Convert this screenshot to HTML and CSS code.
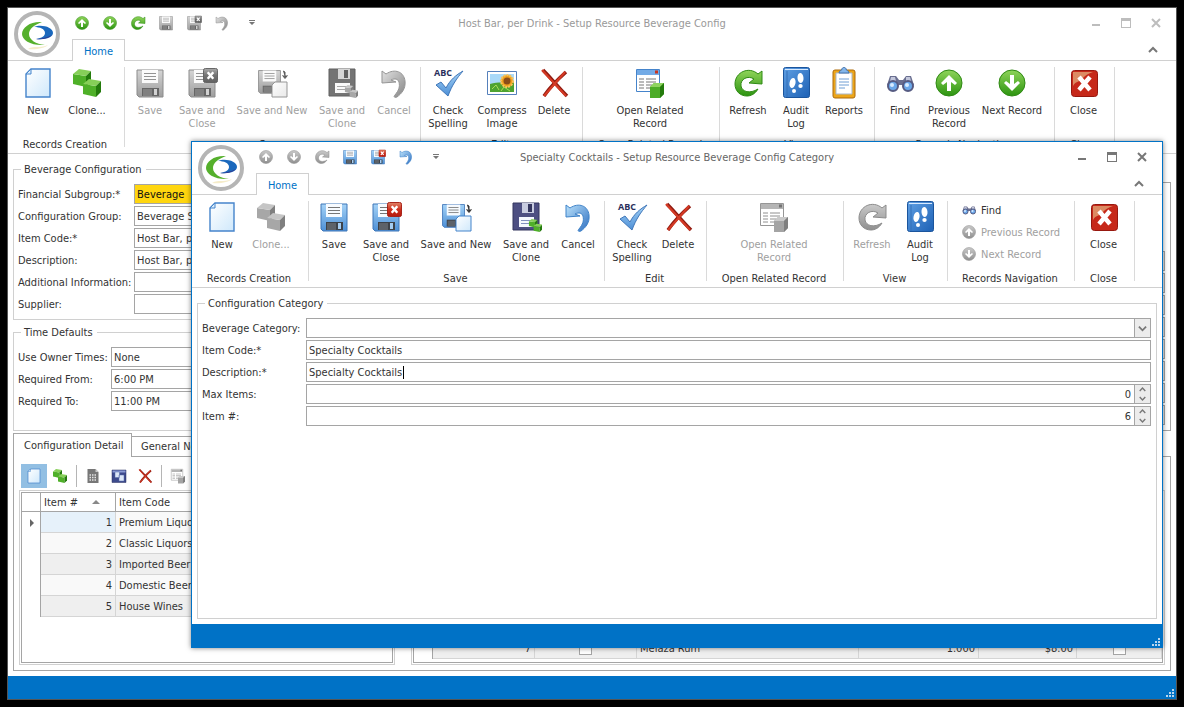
FILE: index.html
```
<!DOCTYPE html>
<html lang="en">
<head>
    <meta charset="UTF-8">
    <meta name="viewport" content="width=device-width, initial-scale=1.0">
    <title>Setup Resource Beverage Config</title>
    <link rel="stylesheet" href="styles.css">
</head>
<body>

    <!-- Icon set -->
    <svg class="icon-defs" aria-hidden="true">
        <defs>
            <linearGradient id="g-paper" x1="0" y1="0" x2="1" y2="1"><stop offset="0" stop-color="#ffffff"/><stop offset="1" stop-color="#cfe8fb"/></linearGradient>
            <linearGradient id="g-green" x1="0" y1="0" x2="0" y2="1"><stop offset="0" stop-color="#8fd45a"/><stop offset="1" stop-color="#2c9410"/></linearGradient>
            <linearGradient id="g-blue" x1="0" y1="0" x2="0" y2="1"><stop offset="0" stop-color="#a5d3f7"/><stop offset="1" stop-color="#4d8fd6"/></linearGradient>
            <linearGradient id="g-book" x1="0" y1="0" x2="1" y2="1"><stop offset="0" stop-color="#5f9fe3"/><stop offset="1" stop-color="#1d61b5"/></linearGradient>
            <linearGradient id="g-red" x1="0" y1="0" x2="0" y2="1"><stop offset="0" stop-color="#e08468"/><stop offset="0.5" stop-color="#cf2f1d"/><stop offset="1" stop-color="#b31a10"/></linearGradient>
            <linearGradient id="g-undo" x1="0" y1="0" x2="1" y2="1"><stop offset="0" stop-color="#b9e1fb"/><stop offset="1" stop-color="#2f6fc0"/></linearGradient>
        </defs>

        <symbol id="i-logo" viewBox="0 0 46 46">
            <circle cx="23" cy="23" r="21" fill="#fff" stroke="#b5b5b5" stroke-width="4"/>
            <path d="M28 11C17 10 8 16 8 23c0 6 9 12 23 11-9-1-16-5-16-11 0-5 5-9 13-12z" fill="#55b02c"/>
            <path d="M20 16c7-3 19 0 19 6 0 4-7 7-17 6 6-1 9-3 9-6 0-4-5-6-11-6z" fill="#1a68bd"/>
            <path d="M22 28c6 0 12-2 16-4-3 3-9 5-16 4z" fill="#34378c"/>
            <path d="M14 38c8 1 17-1 20-4-5 2-9 2-11 2s-6 0-9 2z" fill="#f5ecca"/>
        </symbol>
        <symbol id="i-new" viewBox="0 0 32 32">
            <path d="M9 2h19v28H4V7z" fill="url(#g-paper)" stroke="#4584cb" stroke-width="1.4"/>
            <path d="M9 2v5H4z" fill="#dceefc" stroke="#4584cb"/>
        </symbol>
        <symbol id="i-clone" viewBox="0 0 32 32">
            <path d="M2 7l13 2v11L2 17z" fill="#4fb029"/>
            <path d="M2 7l6-5 12 2-5 5z" fill="#86cf58"/>
            <path d="M15 9l5-5v11l-5 5z" fill="#247b0c"/>
            <path d="M12 17l13 2v11l-13-3z" fill="#4fb029"/>
            <path d="M12 17l6-5 12 2-5 5z" fill="#86cf58"/>
            <path d="M25 19l5-5v11l-5 5z" fill="#247b0c"/>
        </symbol>
        <symbol id="i-disk" viewBox="0 0 32 32">
            <path d="M3 3h26v27H5l-2-2z" fill="url(#g-blue)" stroke="#3f76b8"/>
            <path d="M8 3h16v13H8z" fill="#f7fbff"/>
            <path d="M10 6.500h12M10 9.500h12M10 12.500h12" stroke="#777"/>
            <path d="M8 21h17v8H8z" fill="#3d4249"/>
            <path d="M9 22h9v7H9z" fill="#5d6269"/>
            <path d="M20 22h3v6h-3z" fill="#a5cdf2"/>
        </symbol>
        <symbol id="i-badge-x" viewBox="0 0 16 16">
            <rect x="0.500" y="0.500" width="15" height="15" rx="2" fill="url(#g-red)" stroke="#a31a10"/>
            <path d="M5 4.500l6 7M11 4.500l-6 7" stroke="#fff" stroke-width="2.600"/>
        </symbol>
        <symbol id="i-saveclose" viewBox="0 0 32 32">
            <use href="#i-disk" width="32" height="32"/>
            <use href="#i-badge-x" x="17" y="1" width="15" height="15"/>
        </symbol>
        <symbol id="i-savenew" viewBox="0 0 32 32">
            <use href="#i-disk" x="0" y="1" width="27" height="27"/>
            <path d="M19 15h12v15H16V18z" fill="url(#g-paper)" stroke="#4584cb"/>
            <path d="M27 4l2 1v5M26.500 8.500l2.500 3 2.500-3" fill="#333" stroke="#333"/>
        </symbol>
        <symbol id="i-saveclone" viewBox="0 0 32 32">
            <path d="M3 2h26v25l-2 2H3z" fill="#4d4f82" stroke="#34365f"/>
            <path d="M12 2h12v10H12z" fill="#c8cce0"/>
            <path d="M18 3h4v8h-4z" fill="#34365f"/>
            <path d="M9 16h15v10H9z" fill="#f5f8ff"/>
            <path d="M11 19.500h11M11 22.500h11" stroke="#8292c0"/>
            <use href="#i-clone" x="18" y="17" width="15" height="15"/>
        </symbol>
        <symbol id="i-undo" viewBox="0 0 32 32">
            <path d="M4 4l4 3c9-6 18-2 19 7 1 8-4 13-8 16-2 1-4 0-2-2 4-5 5-8 4-13-1-3-4-4-8-2l5 2L4 16z" fill="url(#g-undo)" stroke="#3f83c9"/>
        </symbol>
        <symbol id="i-spell" viewBox="0 0 32 32">
            <path d="M4 18l5-3 5 6C18 13 24 8 31 4c-6 7-11 14-15 25z" fill="url(#g-blue)" stroke="#3f76b8"/>
        </symbol>
        <symbol id="i-image" viewBox="0 0 32 32">
            <path d="M1.500 4.500h29v23h-29z" fill="#fff" stroke="#5580bb"/>
            <path d="M4 7h24v18H4z" fill="#a9d9f8"/>
            <path d="M4 17c8-3 16 0 24-3v11H4z" fill="#4ea331"/>
            <path d="M6 22l4-4 3 5M15 24l3-4 6 4" stroke="#a8dd55" fill="none"/>
            <circle cx="21" cy="14" r="6" fill="#f0a01c" stroke="#f8c25c" stroke-width="2" stroke-dasharray="2 1"/>
            <circle cx="21" cy="14" r="3.500" fill="#8a4b18"/>
        </symbol>
        <symbol id="i-delete" viewBox="0 0 32 32">
            <path d="M5 3c7 7 15 17 24 26M28 5C19 13 12 20 6 29" fill="none" stroke="#8f1a10" stroke-width="3.500"/>
            <path d="M4 3l24 26M27 5L6 29" stroke="#d43a25" stroke-width="2.200"/>
        </symbol>
        <symbol id="i-related" viewBox="0 0 32 32">
            <path d="M2.500 2.500h23v22h-23z" fill="#fff" stroke="#4584cb"/>
            <path d="M3 3h22v5H3z" fill="#73abe6"/>
            <path d="M21 3.500h3v3h-3z" fill="#c93420"/>
            <path d="M5 12h5M12 12h10M5 15h5M12 15h10M5 18h5M12 18h6M5 21h5M12 21h4" stroke="#777"/>
            <path d="M16 20l4-4h10v11l-4 4H16z" fill="#4cac27"/>
            <path d="M16 20l4-4h10l-4 4z" fill="#8ed35f"/>
            <path d="M26 20l4-4v11l-4 4z" fill="#247b0c"/>
        </symbol>
        <symbol id="i-refresh" viewBox="0 0 32 32">
            <path d="M30 4v13l-13-1 5-4C16 8 8 12 9 19c1 6 9 8 17 3-3 5-7 7-11 7C8 29 3 24 3 17 3 5 17-1 26 7z" fill="url(#g-green)" stroke="#2f8a14"/>
        </symbol>
        <symbol id="i-audit" viewBox="0 0 32 32">
            <rect x="3.500" y="0.500" width="26" height="30" rx="2" fill="url(#g-book)" stroke="#1b559d"/>
            <path d="M5 2.500h23" stroke="#d9eaff"/>
            <path d="M7 4v26" stroke="#3470b8"/>
            <ellipse cx="12.500" cy="16" rx="3" ry="5" fill="#fff" transform="rotate(12 12.500 16)"/>
            <ellipse cx="14" cy="24" rx="2" ry="2" fill="#fff"/>
            <ellipse cx="20.500" cy="11" rx="3" ry="5" fill="#fff" transform="rotate(-5 20 11)"/>
            <ellipse cx="20.500" cy="19" rx="2.200" ry="2" fill="#fff"/>
        </symbol>
        <symbol id="i-reports" viewBox="0 0 32 32">
            <rect x="5" y="3" width="22" height="28" rx="2" fill="#eda61a" stroke="#ad6b0b"/>
            <path d="M8 6h16v21H8z" fill="#fff" stroke="#aab7c8"/>
            <path d="M11 6c0-3 3-2 3-4s4-2 4 0 3 1 3 4z" fill="#84b6ea" stroke="#4272ad"/>
            <path d="M11 12h10M11 15h10M11 18h10M11 21h6" stroke="#6f9ed4"/>
        </symbol>
        <symbol id="i-find" viewBox="0 0 32 32">
            <path d="M6 9h6l3 4h4l3-4h5l3 9H3z" fill="#6a6f90"/>
            <path d="M7 10h4l1 4H6zM22 10h4l1 4h-5z" fill="#c3c7db"/>
            <circle cx="9" cy="19" r="5" fill="#6ba8ea" stroke="#565b82" stroke-width="2"/>
            <circle cx="24" cy="19" r="5" fill="#6ba8ea" stroke="#565b82" stroke-width="2"/>
            <circle cx="8" cy="18" r="2" fill="#d7ebff"/>
            <circle cx="23" cy="18" r="2" fill="#d7ebff"/>
        </symbol>
        <symbol id="i-up" viewBox="0 0 32 32">
            <circle cx="16" cy="16" r="13" fill="url(#g-green)" stroke="#2f8a14"/>
            <path d="M16 8l8 8-2 2-4-3v9h-4v-9l-4 3-2-2z" fill="#fff"/>
        </symbol>
        <symbol id="i-down" viewBox="0 0 32 32">
            <circle cx="16" cy="16" r="13" fill="url(#g-green)" stroke="#2f8a14"/>
            <path d="M16 24l8-8-2-2-4 3V8h-4v9l-4-3-2 2z" fill="#fff"/>
        </symbol>
        <symbol id="i-close" viewBox="0 0 32 32">
            <rect x="3.500" y="3.500" width="26" height="26" rx="3" fill="#c6291a" stroke="#97180f"/>
            <path d="M5 5h20c-6 2-8 4-10 6-1 4-7 2-10 8z" fill="#dc8b63"/>
            <path d="M11 10l11 13M22 10L11 23" stroke="#fff" stroke-width="4.500"/>
        </symbol>
        <symbol id="i-calc" viewBox="0 0 32 32">
            <path d="M5 2h16l6 6v22H5z" fill="#777"/>
            <path d="M21 2v6h6z" fill="#ccc"/>
            <path d="M9 14h14M9 19h14M9 24h14" stroke="#e5e5e5" stroke-width="3" stroke-dasharray="3 2"/>
        </symbol>
        <symbol id="i-windows" viewBox="0 0 32 32">
            <path d="M2 4h28v25H2z" fill="#3d4a8c" stroke="#2a3163"/>
            <path d="M3 5h26v4H3z" fill="#8b9bd4"/>
            <path d="M8 8h9v11H8zM16 14h10v12H16z" fill="#dce7f8" stroke="#566aa8"/>
        </symbol>
        <symbol id="i-grip" viewBox="0 0 8 8">
            <path d="M6 0h2v2H6zM3 3h2v2H3zM6 3h2v2H6zM0 6h2v2H0zM3 6h2v2H3zM6 6h2v2H6z" fill="#b9d6ee"/>
        </symbol>
        <symbol id="i-min" viewBox="0 0 10 10"><path d="M1 6h8v2H1z" fill="currentColor"/></symbol>
        <symbol id="i-max" viewBox="0 0 10 10"><path d="M0 0h10v10H0zM1 3v6h8V3z" fill="currentColor" fill-rule="evenodd"/></symbol>
        <symbol id="i-x" viewBox="0 0 10 10"><path d="M1 1l8 8M9 1L1 9" stroke="currentColor" stroke-width="2"/></symbol>
        <symbol id="i-chevron-up" viewBox="0 0 10 10"><path d="M1 7l4-4 4 4" fill="none" stroke="currentColor" stroke-width="2"/></symbol>
        <symbol id="i-chevron-down" viewBox="0 0 10 10"><path d="M1 3l4 4 4-4" fill="none" stroke="currentColor" stroke-width="2"/></symbol>
        <symbol id="i-more" viewBox="0 0 6 6"><path d="M0 0h6v1H0zM0 2h6L3 5z" fill="currentColor"/></symbol>
    </svg>

    <!-- Host Bar window -->
    <main class="window main-window">
        <svg class="logo"><use href="#i-logo"/></svg>
        <header class="titlebar">
            <div class="quick-access">
                <button type="button" aria-label="Previous record"><svg><use href="#i-up"/></svg></button>
                <button type="button" aria-label="Next record"><svg><use href="#i-down"/></svg></button>
                <button type="button" aria-label="Refresh"><svg><use href="#i-refresh"/></svg></button>
                <button type="button" aria-label="Save" disabled><svg><use href="#i-disk"/></svg></button>
                <button type="button" aria-label="Save and close" disabled><svg><use href="#i-saveclose"/></svg></button>
                <button type="button" aria-label="Cancel" disabled><svg><use href="#i-undo"/></svg></button>
                <button type="button" aria-label="Customize" class="more"><svg><use href="#i-more"/></svg></button>
            </div>
            <h1>Host Bar, per Drink - Setup Resource Beverage Config</h1>
            <div class="window-controls">
                <button type="button" aria-label="Minimize"><svg><use href="#i-min"/></svg></button>
                <button type="button" aria-label="Maximize"><svg><use href="#i-max"/></svg></button>
                <button type="button" aria-label="Close window"><svg><use href="#i-x"/></svg></button>
            </div>
        </header>
        <nav class="ribbon-tabs">
            <a href="#home">Home</a>
            <button type="button" aria-label="Collapse ribbon"><svg><use href="#i-chevron-up"/></svg></button>
        </nav>
        <div class="ribbon">
            <section class="ribbon-group creation">
                <div class="items">
                    <button type="button" class="w-44"><svg><use href="#i-new"/></svg>New</button>
                    <button type="button" class="w-54"><svg><use href="#i-clone"/></svg>Clone...</button>
                </div>
                <h2>Records Creation</h2>
            </section>
            <section class="ribbon-group save">
                <div class="items">
                    <button type="button" class="w-44" disabled><svg><use href="#i-disk"/></svg>Save</button>
                    <button type="button" class="w-60" disabled><svg><use href="#i-saveclose"/></svg>Save and<br>Close</button>
                    <button type="button" class="w-80" disabled><svg><use href="#i-savenew"/></svg>Save and New</button>
                    <button type="button" class="w-60" disabled><svg><use href="#i-saveclone"/></svg>Save and<br>Clone</button>
                    <button type="button" class="w-44" disabled><svg><use href="#i-undo"/></svg>Cancel</button>
                </div>
                <h2>Save</h2>
            </section>
            <section class="ribbon-group edit">
                <div class="items">
                    <button type="button" class="w-48"><svg viewBox="0 0 32 32"><text x="2" y="9" class="icon-abc">ABC</text><use href="#i-spell"/></svg>Check<br>Spelling</button>
                    <button type="button" class="w-60"><svg><use href="#i-image"/></svg>Compress<br>Image</button>
                    <button type="button" class="w-44"><svg><use href="#i-delete"/></svg>Delete</button>
                </div>
                <h2>Edit</h2>
            </section>
            <section class="ribbon-group related">
                <div class="items">
                    <button type="button" class="w-80"><svg><use href="#i-related"/></svg>Open Related<br>Record</button>
                </div>
                <h2>Open Related Record</h2>
            </section>
            <section class="ribbon-group view">
                <div class="items">
                    <button type="button" class="w-48"><svg><use href="#i-refresh"/></svg>Refresh</button>
                    <button type="button" class="w-48"><svg><use href="#i-audit"/></svg>Audit<br>Log</button>
                    <button type="button" class="w-48"><svg><use href="#i-reports"/></svg>Reports</button>
                </div>
                <h2>View</h2>
            </section>
            <section class="ribbon-group navigation">
                <div class="items">
                    <button type="button" class="w-44"><svg><use href="#i-find"/></svg>Find</button>
                    <button type="button" class="w-54"><svg><use href="#i-up"/></svg>Previous<br>Record</button>
                    <button type="button" class="w-72"><svg><use href="#i-down"/></svg>Next Record</button>
                </div>
                <h2>Records Navigation</h2>
            </section>
            <section class="ribbon-group close">
                <div class="items">
                    <button type="button" class="w-44"><svg><use href="#i-close"/></svg>Close</button>
                </div>
                <h2>Close</h2>
            </section>
        </div>

        <div class="content">
            <div class="details">
                <div class="details-left">
                    <fieldset class="config">
                        <legend>Beverage Configuration</legend>
                        <div class="row"><label for="subgroup">Financial Subgroup:*</label><input id="subgroup" class="required" type="text" value="Beverage"></div>
                        <div class="row"><label for="group">Configuration Group:</label><input id="group" type="text" value="Beverage Service"></div>
                        <div class="row"><label for="code">Item Code:*</label><input id="code" type="text" value="Host Bar, per Drink"></div>
                        <div class="row"><label for="desc">Description:</label><input id="desc" type="text" value="Host Bar, per Drink"></div>
                        <div class="row"><label for="info">Additional Information:</label><input id="info" type="text"></div>
                        <div class="row"><label for="supplier">Supplier:</label><input id="supplier" type="text"></div>
                    </fieldset>
                    <fieldset class="times">
                        <legend>Time Defaults</legend>
                        <div class="row"><label for="owner">Use Owner Times:</label><input id="owner" type="text" value="None"></div>
                        <div class="row"><label for="from">Required From:</label><input id="from" type="text" value="6:00 PM"></div>
                        <div class="row"><label for="to">Required To:</label><input id="to" type="text" value="11:00 PM"></div>
                    </fieldset>
                </div>
                <div class="details-right">
                    <input type="text" aria-label="Value 1">
                    <input type="text" aria-label="Value 2">
                    <input type="text" aria-label="Value 3">
                    <input type="text" aria-label="Value 4">
                    <input type="text" aria-label="Value 5">
                    <input type="text" aria-label="Value 6">
                    <input type="text" aria-label="Value 7">
                    <input type="text" aria-label="Value 8">
                </div>
            </div>

            <div class="page-tabs">
                <a href="#detail" class="active">Configuration Detail</a>
                <a href="#notes">General Notes</a>
            </div>
            <div class="page">
                <div class="toolbar">
                    <button type="button" class="selected" aria-label="New item"><svg><use href="#i-new"/></svg></button>
                    <button type="button" aria-label="Clone item"><svg><use href="#i-clone"/></svg></button>
                    <span class="divider"></span>
                    <button type="button" aria-label="Calculate"><svg><use href="#i-calc"/></svg></button>
                    <button type="button" aria-label="Copy"><svg><use href="#i-windows"/></svg></button>
                    <button type="button" aria-label="Delete item"><svg><use href="#i-delete"/></svg></button>
                    <span class="divider"></span>
                    <button type="button" aria-label="Related records" disabled><svg><use href="#i-related"/></svg></button>
                </div>
                <div class="grids">
                    <div class="grid-panel categories">
                        <table>
                            <colgroup><col class="c-mark"><col class="c-item"><col></colgroup>
                            <thead>
                                <tr><th></th><th>Item # <span class="sort"></span></th><th>Item Code</th></tr>
                            </thead>
                            <tbody>
                                <tr class="current"><td><span class="marker"></span></td><td class="num">1</td><td>Premium Liquors</td></tr>
                                <tr><td></td><td class="num">2</td><td>Classic Liquors</td></tr>
                                <tr><td></td><td class="num">3</td><td>Imported Beer</td></tr>
                                <tr><td></td><td class="num">4</td><td>Domestic Beer</td></tr>
                                <tr><td></td><td class="num">5</td><td>House Wines</td></tr>
                            </tbody>
                        </table>
                    </div>
                    <div class="grid-panel drinks">
                        <table>
                            <colgroup><col class="c-mark"><col class="c-seq"><col class="c-seq"><col><col class="c-qty"><col class="c-price"><col class="c-flag"></colgroup>
                            <thead>
                                <tr><th></th><th></th><th></th><th></th><th></th><th></th><th></th></tr>
                            </thead>
                            <tbody>
                                <tr><td></td><td></td><td></td><td></td><td></td><td></td><td></td></tr>
                                <tr><td></td><td></td><td></td><td></td><td></td><td></td><td></td></tr>
                                <tr><td></td><td></td><td></td><td></td><td></td><td></td><td></td></tr>
                                <tr><td></td><td></td><td></td><td></td><td></td><td></td><td></td></tr>
                                <tr><td></td><td></td><td></td><td></td><td></td><td></td><td></td></tr>
                                <tr><td></td><td></td><td></td><td></td><td></td><td></td><td></td></tr>
                                <tr>
                                    <td></td>
                                    <td class="num">7</td>
                                    <td class="check"><input type="checkbox" aria-label="Selected"></td>
                                    <td>Melaza Rum</td>
                                    <td class="num">1.000</td>
                                    <td class="num">$8.00</td>
                                    <td class="check"><input type="checkbox" aria-label="Taxable"></td>
                                </tr>
                            </tbody>
                        </table>
                    </div>
                </div>
            </div>
        </div>
        <footer class="statusbar"><svg><use href="#i-grip"/></svg></footer>
    </main>

    <!-- Specialty Cocktails window -->
    <section class="window dialog">
        <svg class="logo"><use href="#i-logo"/></svg>
        <header class="titlebar">
            <div class="quick-access">
                <button type="button" aria-label="Previous record" disabled><svg><use href="#i-up"/></svg></button>
                <button type="button" aria-label="Next record" disabled><svg><use href="#i-down"/></svg></button>
                <button type="button" aria-label="Refresh" disabled><svg><use href="#i-refresh"/></svg></button>
                <button type="button" aria-label="Save"><svg><use href="#i-disk"/></svg></button>
                <button type="button" aria-label="Save and close"><svg><use href="#i-saveclose"/></svg></button>
                <button type="button" aria-label="Cancel"><svg><use href="#i-undo"/></svg></button>
                <button type="button" aria-label="Customize" class="more"><svg><use href="#i-more"/></svg></button>
            </div>
            <h1>Specialty Cocktails - Setup Resource Beverage Config Category</h1>
            <div class="window-controls">
                <button type="button" aria-label="Minimize"><svg><use href="#i-min"/></svg></button>
                <button type="button" aria-label="Maximize"><svg><use href="#i-max"/></svg></button>
                <button type="button" aria-label="Close window"><svg><use href="#i-x"/></svg></button>
            </div>
        </header>
        <nav class="ribbon-tabs">
            <a href="#dialog-home">Home</a>
            <button type="button" aria-label="Collapse ribbon"><svg><use href="#i-chevron-up"/></svg></button>
        </nav>
        <div class="ribbon">
            <section class="ribbon-group creation">
                <div class="items">
                    <button type="button" class="w-44"><svg><use href="#i-new"/></svg>New</button>
                    <button type="button" class="w-54" disabled><svg><use href="#i-clone"/></svg>Clone...</button>
                </div>
                <h2>Records Creation</h2>
            </section>
            <section class="ribbon-group save">
                <div class="items">
                    <button type="button" class="w-44"><svg><use href="#i-disk"/></svg>Save</button>
                    <button type="button" class="w-60"><svg><use href="#i-saveclose"/></svg>Save and<br>Close</button>
                    <button type="button" class="w-80"><svg><use href="#i-savenew"/></svg>Save and New</button>
                    <button type="button" class="w-60"><svg><use href="#i-saveclone"/></svg>Save and<br>Clone</button>
                    <button type="button" class="w-44"><svg><use href="#i-undo"/></svg>Cancel</button>
                </div>
                <h2>Save</h2>
            </section>
            <section class="ribbon-group edit">
                <div class="items">
                    <button type="button" class="w-48"><svg viewBox="0 0 32 32"><text x="2" y="9" class="icon-abc">ABC</text><use href="#i-spell"/></svg>Check<br>Spelling</button>
                    <button type="button" class="w-44"><svg><use href="#i-delete"/></svg>Delete</button>
                </div>
                <h2>Edit</h2>
            </section>
            <section class="ribbon-group related">
                <div class="items">
                    <button type="button" class="w-80" disabled><svg><use href="#i-related"/></svg>Open Related<br>Record</button>
                </div>
                <h2>Open Related Record</h2>
            </section>
            <section class="ribbon-group view">
                <div class="items">
                    <button type="button" class="w-48" disabled><svg><use href="#i-refresh"/></svg>Refresh</button>
                    <button type="button" class="w-48"><svg><use href="#i-audit"/></svg>Audit<br>Log</button>
                </div>
                <h2>View</h2>
            </section>
            <section class="ribbon-group navigation">
                <div class="items stacked">
                    <button type="button"><svg><use href="#i-find"/></svg>Find</button>
                    <button type="button" disabled><svg><use href="#i-up"/></svg>Previous Record</button>
                    <button type="button" disabled><svg><use href="#i-down"/></svg>Next Record</button>
                </div>
                <h2>Records Navigation</h2>
            </section>
            <section class="ribbon-group close">
                <div class="items">
                    <button type="button" class="w-44"><svg><use href="#i-close"/></svg>Close</button>
                </div>
                <h2>Close</h2>
            </section>
        </div>

        <div class="content">
            <fieldset class="category">
                <legend>Configuration Category</legend>
                <div class="row">
                    <label for="category">Beverage Category:</label>
                    <div class="field">
                        <select id="category"><option></option></select>
                        <span class="drop"><svg><use href="#i-chevron-down"/></svg></span>
                    </div>
                </div>
                <div class="row"><label for="cat-code">Item Code:*</label><input id="cat-code" type="text" value="Specialty Cocktails"></div>
                <div class="row">
                    <label for="cat-desc">Description:*</label>
                    <div class="field"><input id="cat-desc" type="text" value="Specialty Cocktails"><span class="caret"></span></div>
                </div>
                <div class="row">
                    <label for="max-items">Max Items:</label>
                    <div class="field">
                        <input id="max-items" class="num" type="text" value="0">
                        <span class="spin">
                            <button type="button" aria-label="Increase max items"><svg><use href="#i-chevron-up"/></svg></button>
                            <button type="button" aria-label="Decrease max items"><svg><use href="#i-chevron-down"/></svg></button>
                        </span>
                    </div>
                </div>
                <div class="row">
                    <label for="item-no">Item #:</label>
                    <div class="field">
                        <input id="item-no" class="num" type="text" value="6">
                        <span class="spin">
                            <button type="button" aria-label="Increase item number"><svg><use href="#i-chevron-up"/></svg></button>
                            <button type="button" aria-label="Decrease item number"><svg><use href="#i-chevron-down"/></svg></button>
                        </span>
                    </div>
                </div>
            </fieldset>
        </div>
        <footer class="statusbar"><svg><use href="#i-grip"/></svg></footer>
    </section>

</body>
</html>
```
FILE: styles.css
```
* {
    box-sizing: border-box;
}

body {
    margin: 0;
    padding: 7px;
    height: 100vh;
    overflow: hidden;
    background: #000;
    color: #333;
    font: 11px/13px "DejaVu Sans Condensed", Tahoma, sans-serif;
}

button, input, select {
    font: inherit;
    color: inherit;
}

button {
    padding: 0;
    border: 0;
    background: none;
}

button:disabled {
    color: #a0a0a0;
}

button:disabled svg {
    filter: grayscale(1);
    opacity: 0.8;
}

a {
    color: inherit;
    text-decoration: none;
}

h1, h2 {
    margin: 0;
    font: inherit;
}

.icon-defs {
    position: absolute;
    width: 0;
    height: 0;
}

.icon-abc {
    font: bold 9px "Open Sans", sans-serif;
    fill: #2a2f5c;
}

/* Windows */
.window {
    display: flex;
    flex-direction: column;
    background: #fff;
}

.main-window {
    position: relative;
    height: 100%;
    border: 1px solid #555;
}

.dialog {
    position: absolute;
    top: 141px;
    right: 21px;
    bottom: 59px;
    left: 191px;
    border: 1px solid #0072c6;
    border-bottom: 0;
    box-shadow: 0 0 5px rgba(0, 0, 0, 0.5);
}

.logo {
    position: absolute;
    top: 3px;
    left: 6px;
    width: 46px;
    height: 46px;
}

.titlebar {
    display: grid;
    grid-template-columns: 1fr auto 1fr;
    align-items: center;
    height: 30px;
    flex: none;
}

.titlebar h1 {
    color: #666;
}

.main-window .titlebar h1 {
    color: #999;
}

.quick-access {
    display: flex;
    align-items: center;
    gap: 12px;
    padding-left: 66px;
}

.quick-access svg {
    display: block;
    width: 16px;
    height: 16px;
}

.quick-access .more {
    margin-left: 7px;
    color: #777;
}

.quick-access .more svg {
    width: 6px;
    height: 6px;
}

.window-controls {
    display: flex;
    justify-content: flex-end;
    padding-right: 5px;
    color: #777;
}

.main-window .window-controls {
    color: #bdbdbd;
}

.window-controls button {
    width: 30px;
    height: 20px;
}

.window-controls svg {
    display: block;
    width: 10px;
    height: 10px;
    margin: auto;
}

/* Ribbon */
.ribbon-tabs {
    display: flex;
    justify-content: space-between;
    align-items: flex-end;
    height: 23px;
    flex: none;
    padding: 0 18px 0 64px;
    border-bottom: 1px solid #d0d0d0;
}

.ribbon-tabs a {
    width: 53px;
    height: 22px;
    margin-bottom: -1px;
    border: 1px solid #d0d0d0;
    border-bottom: 0;
    background: #fff;
    color: #0072c6;
    line-height: 23px;
    text-align: center;
}

.ribbon-tabs button {
    height: 20px;
    color: #777;
}

.ribbon-tabs button svg {
    display: block;
    width: 10px;
    height: 10px;
}

.ribbon {
    display: flex;
    height: 93px;
    flex: none;
    border-bottom: 1px solid #d0d0d0;
}

.ribbon-group {
    display: flex;
    flex-direction: column;
    justify-content: space-between;
    padding: 6px 3px 2px 0;
    background: linear-gradient(#dadada, #dadada) right 6px / 1px 80px no-repeat;
}

.ribbon-group h2 {
    text-align: center;
    white-space: nowrap;
}

.ribbon-group .items {
    display: flex;
    padding: 0 3px;
}

.items button {
    display: flex;
    flex: none;
    flex-direction: column;
    align-items: center;
    white-space: nowrap;
    text-align: center;
}

.items svg {
    width: 32px;
    height: 32px;
    margin-bottom: 5px;
}

.w-44 { width: 44px; }
.w-48 { width: 48px; }
.w-54 { width: 54px; }
.w-60 { width: 60px; }
.w-72 { width: 72px; }
.w-80 { width: 80px; }

.creation { width: 117px; }
.creation .items { justify-content: center; }
.save { width: 296px; }
.edit { width: 162px; }
.related { width: 137px; }
.related .items { justify-content: center; }
.view { width: 155px; }
.view .items { padding-left: 4px; }
.navigation { width: 180px; }
.close { width: 60px; }
.close .items { justify-content: center; }

.dialog .edit { width: 102px; }
.dialog .view { width: 104px; }
.dialog .navigation { width: 127px; }

.items.stacked {
    flex-direction: column;
    padding-left: 13px;
}

.stacked button {
    flex-direction: row;
    gap: 4px;
    height: 22px;
    padding-bottom: 4px;
}

.stacked svg {
    width: 16px;
    height: 16px;
    margin: 0;
}

/* Forms */
.content {
    display: flex;
    flex-direction: column;
    flex: 1;
    min-height: 0;
    padding: 8px 5px 5px;
}

fieldset {
    margin: 0;
    min-width: 0;
    padding: 8px 5px 5px 4px;
    border: 1px solid #d0d0d0;
}

legend {
    height: 14px;
    margin-left: 3px;
    padding: 0 4px 0 3px;
    line-height: 16px;
}

.row {
    display: flex;
    height: 20px;
    margin-bottom: 2px;
}

.row:last-child {
    margin-bottom: 0;
}

.row label {
    flex: none;
    line-height: 22px;
    white-space: nowrap;
}

.row > input {
    flex: 1;
}

.row input, .row select {
    min-width: 0;
    height: 20px;
    padding: 0 2px;
    border: 1px solid #a5a5a5;
    border-radius: 0;
    background: #fff;
    outline: 0;
}

.row .required {
    background: #ffd60f;
    color: #111;
}

.config label { width: 116px; }
.times label { width: 93px; }
.category label { width: 104px; }

.category {
    flex: 1;
}

.field {
    position: relative;
    display: flex;
    flex: 1;
}

.field input, .field select {
    flex: 1;
    appearance: none;
}

.field .num {
    padding-right: 3px;
    text-align: right;
}

.drop, .spin {
    display: flex;
    flex-direction: column;
    justify-content: center;
    align-items: center;
    width: 17px;
    margin-left: -1px;
    border: 1px solid #a5a5a5;
    background: #ececec;
    color: #777;
    z-index: 1;
}

.drop svg {
    width: 9px;
    height: 9px;
}

.spin button {
    width: 15px;
    height: 9px;
}

.spin svg {
    display: block;
    width: 7px;
    height: 7px;
    margin: 1px auto;
}

.caret {
    position: absolute;
    top: 4px;
    left: 97px;
    width: 1px;
    height: 13px;
    background: #000;
}

/* Record details */
.details {
    display: flex;
    gap: 10px;
    flex: none;
}

.details-left {
    display: flex;
    flex-direction: column;
    gap: 5px;
    width: 388px;
}

.times {
    flex: 1;
}

.details-right {
    display: flex;
    flex-direction: column;
    gap: 2px;
    flex: 1;
    margin-top: 20px;
    padding: 68px 5px 5px;
    border: 1px solid #a5a5a5;
}

.details-right input {
    height: 20px;
    border: 1px solid #a5a5a5;
    background: #ececec;
}

.page-tabs {
    display: flex;
    align-items: flex-end;
    flex: none;
    height: 24px;
    margin-top: 2px;
}

.page-tabs a {
    height: 21px;
    padding: 0 9px;
    border: 1px solid #a5a5a5;
    border-left: 0;
    line-height: 20px;
}

.page-tabs .active {
    width: 119px;
    height: 24px;
    padding-left: 10px;
    border-left: 1px solid #a5a5a5;
    border-bottom: 0;
    background: #fff;
    line-height: 23px;
    white-space: nowrap;
    z-index: 1;
}

.page {
    display: flex;
    flex-direction: column;
    flex: 1;
    min-height: 0;
    margin-top: -1px;
    padding: 7px 5px 5px;
    border: 1px solid #a5a5a5;
}

.toolbar {
    display: flex;
    flex: none;
    height: 24px;
    margin: 0 0 2px 2px;
}

.toolbar button {
    width: 26px;
}

.toolbar .selected {
    background: #92bfe3;
}

.toolbar svg {
    display: block;
    width: 16px;
    height: 16px;
    margin: auto;
}

.divider {
    width: 1px;
    margin: 1px 3px;
    background: #b5b5b5;
}

.grids {
    display: flex;
    gap: 16px;
    flex: 1;
    min-height: 0;
}

/* Grids */
.grid-panel {
    padding: 2px;
    border: 1px solid #d0d0d0;
    box-shadow: inset 0 0 0 1px #fff, inset 0 0 0 2px #a5a5a5;
    overflow: hidden;
}

.categories {
    width: 376px;
}

.drinks {
    flex: 1;
}

table {
    width: 100%;
    table-layout: fixed;
    border-collapse: separate;
    border-spacing: 0;
}

.c-mark { width: 19px; }
.c-item { width: 75px; }
.c-seq { width: 102px; }
.c-qty { width: 120px; }
.c-price { width: 98px; }
.c-flag { width: 85px; }

th {
    height: 19px;
    padding: 0 3px;
    border-right: 1px solid #a5a5a5;
    border-bottom: 1px solid #a5a5a5;
    font-weight: normal;
    text-align: left;
}

td {
    height: 21px;
    padding: 0 3px;
    border-right: 1px solid #d5d5d5;
    border-bottom: 1px solid #d5d5d5;
    background: #f9f9f9;
    white-space: nowrap;
}

tr:nth-child(odd) td {
    background: #efefef;
}

tbody tr td:first-child {
    border-bottom: 0;
    border-right-color: #a5a5a5;
    background: #fff;
}

tbody tr.current td:nth-child(2) {
    background: #e6f1fa;
}

tbody tr.current td:last-child {
    background: #f9f9f9;
}

td.num {
    text-align: right;
}

td.check {
    padding: 0;
    text-align: center;
}

td.check input {
    appearance: none;
    display: block;
    width: 13px;
    height: 13px;
    margin: 0 auto;
    border: 1px solid #a5a5a5;
    background: #fff;
}

.sort {
    display: inline-block;
    margin: 0 0 2px 11px;
    border: 4px solid transparent;
    border-top: 0;
    border-bottom-color: #888;
}

.marker {
    display: block;
    margin-left: 5px;
    border: 4px solid transparent;
    border-right: 0;
    border-left-color: #666;
}

/* Status bar */
.statusbar {
    display: flex;
    justify-content: flex-end;
    align-items: flex-end;
    flex: none;
    height: 24px;
    padding: 2px;
    background: #0072c6;
}

.main-window .statusbar {
    height: 23px;
}

.statusbar svg {
    width: 8px;
    height: 8px;
}
```
